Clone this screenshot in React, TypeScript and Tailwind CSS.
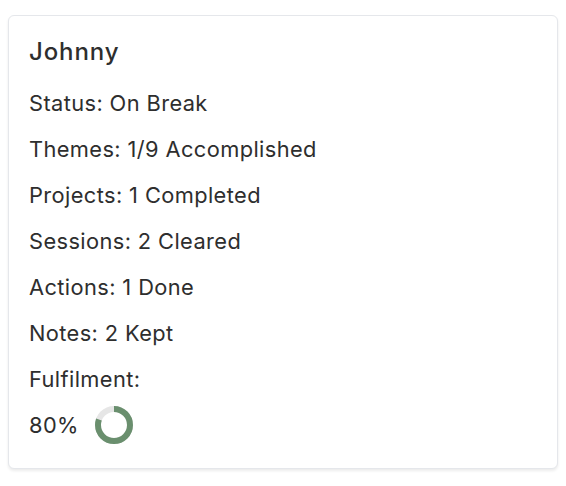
import React from "react";

const rows = [
  "Status: On Break",
  "Themes: 1/9 Accomplished",
  "Projects: 1 Completed",
  "Sessions: 2 Cleared",
  "Actions: 1 Done",
  "Notes: 2 Kept",
  "Fulfilment:",
];

function Donut({ pct }: { pct: number }) {
  const r = 16;
  const c = 2 * Math.PI * r;
  return (
    <svg width="38" height="38" viewBox="0 0 38 38" className="-rotate-90">
      <circle cx="19" cy="19" r={r} fill="none" stroke="#e6e6e6" strokeWidth="6" />
      <circle
        cx="19"
        cy="19"
        r={r}
        fill="none"
        stroke="#6a8f6e"
        strokeWidth="6"
        strokeDasharray={`${(c * pct) / 100} ${c}`}
      />
    </svg>
  );
}

export default function App() {
  return (
    <div className="min-h-[486px] bg-white px-2 pt-[15px]" style={{ fontFamily: "Inter, 'Noto Sans', sans-serif" }}>
      <div className="w-[550px] rounded-md border border-gray-200 bg-white px-5 pb-5 pt-[21px] text-[#2e2e2e] shadow-[0_2px_3px_rgba(0,0,0,0.08)]">
        <div className="mb-[13px] text-[24px] font-medium leading-[30px] tracking-[0.9px]">Johnny</div>
        {rows.map(r => (
          <div key={r} className="text-[21.8px] leading-[46px] tracking-[0.4px]">{r}</div>
        ))}
        <div className="flex h-[46px] items-center gap-4 text-[21.8px] tracking-[0.4px]">
          <span>80%</span>
          <Donut pct={80} />
        </div>
      </div>
    </div>
  );
}
